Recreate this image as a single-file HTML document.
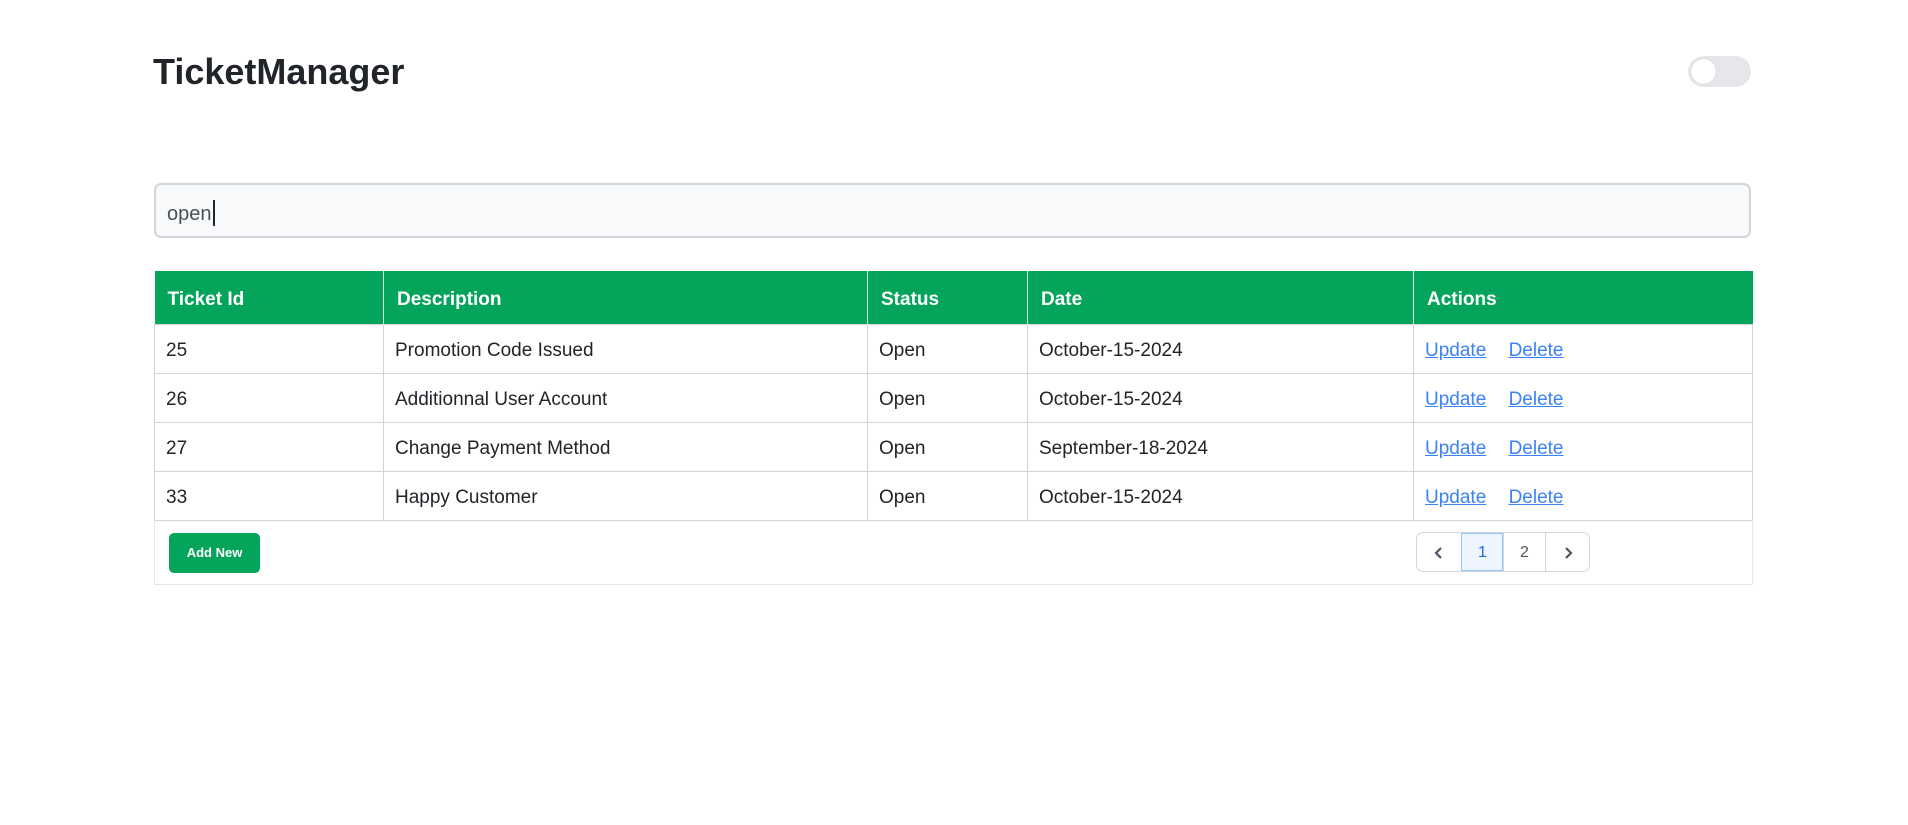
<!DOCTYPE html>
<html><head><meta charset="utf-8"><style>
*{box-sizing:border-box;margin:0;padding:0}
body{width:1908px;height:825px;background:#fff;font-family:"Liberation Sans",Arial,sans-serif;color:#212529;position:relative;overflow:hidden}
.title{position:absolute;left:153px;top:51px;font-size:36px;font-weight:bold;color:#212529;line-height:42px}
.toggle{position:absolute;left:1688px;top:56px;width:63px;height:31px;border-radius:16px;background:#e5e7eb}
.toggle:before{content:"";position:absolute;left:3px;top:3px;width:25px;height:25px;border-radius:50%;background:#fff;box-shadow:0 0 1px rgba(0,0,0,.3)}
.search{position:absolute;left:154px;top:183px;width:1597px;height:55px;border:2px solid #d1d5db;border-radius:7px;background:#f8f9fa;font-size:20px;color:#495057;padding-left:11px;padding-top:4px;line-height:51px}
.search span{display:inline-block;width:2px;height:26px;background:#212529;vertical-align:middle;margin-left:1px;margin-top:-3px}
table{position:absolute;left:154px;top:271px;width:1599px;border-collapse:collapse}
th{background:#04a55a;color:#fff;font-size:19px;font-weight:bold;text-align:left;height:53px;padding-left:13px;padding-top:5px;border-right:1px solid #e5e7eb}
th:last-child{border-right:none}
td{height:49px;font-size:19px;padding-left:11px;padding-top:4px;border:1px solid #d1d5db}
td a{color:#3b82f6;text-decoration:underline;margin-right:17px}
.foot{position:absolute;left:154px;top:520px;width:1599px;height:65px;border:1px solid #e5e7eb;border-top:none}
.btn{position:absolute;left:169px;top:533px;width:91px;height:40px;background:#04a55a;border-radius:5px;color:#fff;font-weight:bold;font-size:13px;text-align:center;line-height:40px}
.pag{position:absolute;left:1416px;top:532px;height:40px;display:flex;border:1px solid #d1d5db;border-radius:7px;overflow:hidden}
.pag div{height:38px;line-height:40px;text-align:center;font-size:16px;color:#4b5563;border-left:1px solid #d1d5db}
.pag div:first-child{border-left:none}
.pag .on{background:#eef5ff;color:#2563eb;outline:1px solid #93c5fd;outline-offset:-1px}
</style></head><body>
<div class="title">TicketManager</div>
<div class="toggle"></div>
<div class="search">open<span></span></div>
<table>
<tr><th style="width:229px">Ticket Id</th><th style="width:484px">Description</th><th style="width:160px">Status</th><th style="width:386px">Date</th><th>Actions</th></tr>
<tr><td>25</td><td>Promotion Code Issued</td><td>Open</td><td>October-15-2024</td><td><a>Update</a> <a>Delete</a></td></tr>
<tr><td>26</td><td>Additionnal User Account</td><td>Open</td><td>October-15-2024</td><td><a>Update</a> <a>Delete</a></td></tr>
<tr><td>27</td><td>Change Payment Method</td><td>Open</td><td>September-18-2024</td><td><a>Update</a> <a>Delete</a></td></tr>
<tr><td>33</td><td>Happy Customer</td><td>Open</td><td>October-15-2024</td><td><a>Update</a> <a>Delete</a></td></tr>
</table>
<div class="foot"></div>
<div class="btn">Add New</div>
<div class="pag">
<div style="width:44px"><svg width="12" height="14" viewBox="0 0 12 14" style="vertical-align:middle"><path d="M8 2 L3 7 L8 12" stroke="#4b5563" stroke-width="2.2" fill="none"/></svg></div>
<div class="on" style="width:42px">1</div>
<div style="width:42px">2</div>
<div style="width:44px"><svg width="12" height="14" viewBox="0 0 12 14" style="vertical-align:middle"><path d="M4 2 L9 7 L4 12" stroke="#4b5563" stroke-width="2.2" fill="none"/></svg></div>
</div>
</body></html>
